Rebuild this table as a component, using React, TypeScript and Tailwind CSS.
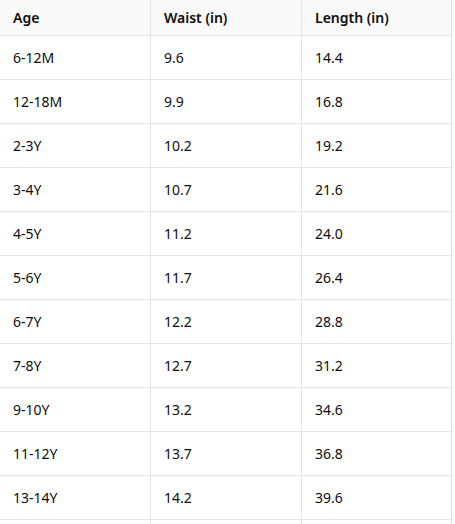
import React from 'react';

const rows = [
  ['6-12M', '9.6', '14.4'],
  ['12-18M', '9.9', '16.8'],
  ['2-3Y', '10.2', '19.2'],
  ['3-4Y', '10.7', '21.6'],
  ['4-5Y', '11.2', '24.0'],
  ['5-6Y', '11.7', '26.4'],
  ['6-7Y', '12.2', '28.8'],
  ['7-8Y', '12.7', '31.2'],
  ['9-10Y', '13.2', '34.6'],
  ['11-12Y', '13.7', '36.8'],
  ['13-14Y', '14.2', '39.6'],
  ['', '', ''],
];

const cell = 'border-r border-b border-[#e3e3e3] pl-[13px] flex items-center';

export default function App() {
  return (
    <div className="h-[524px] overflow-hidden bg-white text-[14px] text-[#0d0d0d] font-['Noto_Sans',sans-serif]">
      <div className="grid grid-cols-[151px_151px_150px] w-[452px]">
        <div className={`${cell} h-[36px] bg-[#f9f9f9] font-semibold`}>Age</div>
        <div className={`${cell} h-[36px] bg-[#f9f9f9] font-semibold`}>Waist (in)</div>
        <div className={`${cell} h-[36px] bg-[#f9f9f9] font-semibold`}>Length (in)</div>
        {rows.map((r, i) => (
          <React.Fragment key={i}>
            <div className={`${cell} h-[44px]`}>{r[0]}</div>
            <div className={`${cell} h-[44px]`}>{r[1]}</div>
            <div className={`${cell} h-[44px]`}>{r[2]}</div>
          </React.Fragment>
        ))}
      </div>
    </div>
  );
}
